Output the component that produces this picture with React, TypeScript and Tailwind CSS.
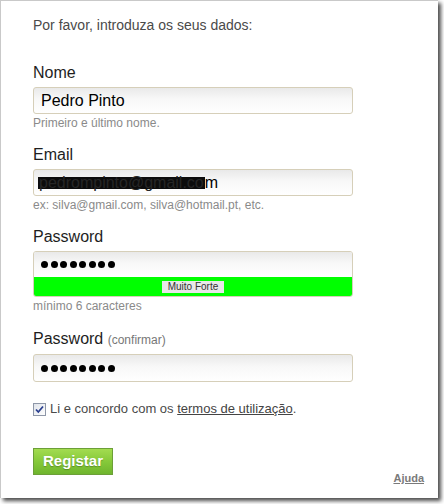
import React from "react";

const Dots = () => (
  <div className="flex items-center gap-[2.5px]">
    {Array.from({ length: 8 }).map((_, i) => (
      <span key={i} className="block w-[7px] h-[7px] rounded-full bg-black" />
    ))}
  </div>
);

const inputBg = "bg-[linear-gradient(to_bottom,#e9e9e9_0%,#f8f8f8_45%,#ffffff_100%)]";

export default function App() {
  return (
    <div className="w-[444px] h-[504px] bg-white overflow-hidden" style={{ fontFamily: '"Liberation Sans", Arial, sans-serif' }}>
      <div className="w-[438px] h-[498px] bg-white border-l border-t border-[#c9c9c9] shadow-[3px_3px_4px_rgba(0,0,0,0.7)] relative pl-[32px] pt-[16px]">
        <p className="text-[14px] leading-[16px] text-[#4a4a4a]">Por favor, introduza os seus dados:</p>

        {/* Nome */}
        <div className="mt-[31px] text-[16px] leading-[18px] text-[#1e1e1e]">Nome</div>
        <div className={`mt-[5px] w-[320px] h-[27px] rounded-[3px] border border-[#d6cfb9] ${inputBg} flex items-center pl-[7px] text-[16px] text-black`}>
          Pedro Pinto
        </div>
        <div className="mt-[2px] text-[12px] leading-[14px] text-[#8a8a8a]">Primeiro e último nome.</div>

        {/* Email */}
        <div className="mt-[16px] text-[16px] leading-[18px] text-[#1e1e1e]">Email</div>
        <div className={`mt-[5px] w-[320px] h-[27px] rounded-[3px] border border-[#d6cfb9] ${inputBg} flex items-center pl-[4px] text-[16px] text-black`}>
          <span className="inline-block bg-[#0c0c0c] text-[#262626] leading-[12px] px-[1px]">pedrompinto@gmail.co</span>
          <span>m</span>
        </div>
        <div className="mt-[2px] text-[12px] leading-[14px] text-[#8a8a8a]">ex: silva@gmail.com, silva@hotmail.pt, etc.</div>

        {/* Password */}
        <div className="mt-[16px] text-[16px] leading-[18px] text-[#1e1e1e]">Password</div>
        <div className="mt-[5px] w-[320px] rounded-[3px] border border-[#d6cfb9] overflow-hidden">
          <div className={`h-[25px] ${inputBg} flex items-center pl-[7px]`}>
            <Dots />
          </div>
          <div className="h-[19px] bg-[#00ff00] flex items-center justify-center">
            <span className="block w-[62px] h-[12px] bg-[#e8e8e8] text-[10px] leading-[12px] text-[#333] text-center">Muito Forte</span>
          </div>
        </div>
        <div className="mt-[2px] text-[12px] leading-[14px] text-[#8a8a8a]">mínimo 6 caracteres</div>

        {/* Password confirmar */}
        <div className="mt-[17px] text-[16px] leading-[18px] text-[#1e1e1e]">
          Password <span className="text-[12px] text-[#777]">(confirmar)</span>
        </div>
        <div className={`mt-[5px] w-[320px] h-[28px] rounded-[3px] border border-[#d6cfb9] ${inputBg} flex items-center pl-[7px]`}>
          <Dots />
        </div>

        {/* Checkbox */}
        <div className="mt-[19px] flex items-center gap-[4px] text-[13px] leading-[16px] text-[#4a4a4a]">
          <svg width="13" height="13" viewBox="0 0 13 13" className="shrink-0">
            <defs>
              <linearGradient id="cb" x1="0" y1="0" x2="1" y2="1">
                <stop offset="0" stopColor="#dfe3ea" />
                <stop offset="1" stopColor="#ffffff" />
              </linearGradient>
            </defs>
            <rect x="0.5" y="0.5" width="12" height="12" fill="url(#cb)" stroke="#8e97a8" />
            <path d="M3 6.5 L5.3 9 L10 3.5" fill="none" stroke="#2a3f8f" strokeWidth="1.8" />
          </svg>
          <span>
            Li e concordo com os <span className="underline text-[#444]">termos de utilização</span>.
          </span>
        </div>

        {/* Button */}
        <div className="mt-[31px] w-[80px] h-[27px] border border-[#6c9f38] bg-[linear-gradient(to_bottom,#a3dc50_0%,#86c93a_50%,#6fb52e_100%)] flex items-center justify-center text-white font-bold text-[15px] [text-shadow:0_1px_1px_rgba(0,0,0,0.25)]">
          Registar
        </div>

        <div className="absolute right-[14px] top-[471px] text-[11px] leading-[13px] font-bold text-[#7a7a7a] underline">Ajuda</div>
      </div>
    </div>
  );
}
